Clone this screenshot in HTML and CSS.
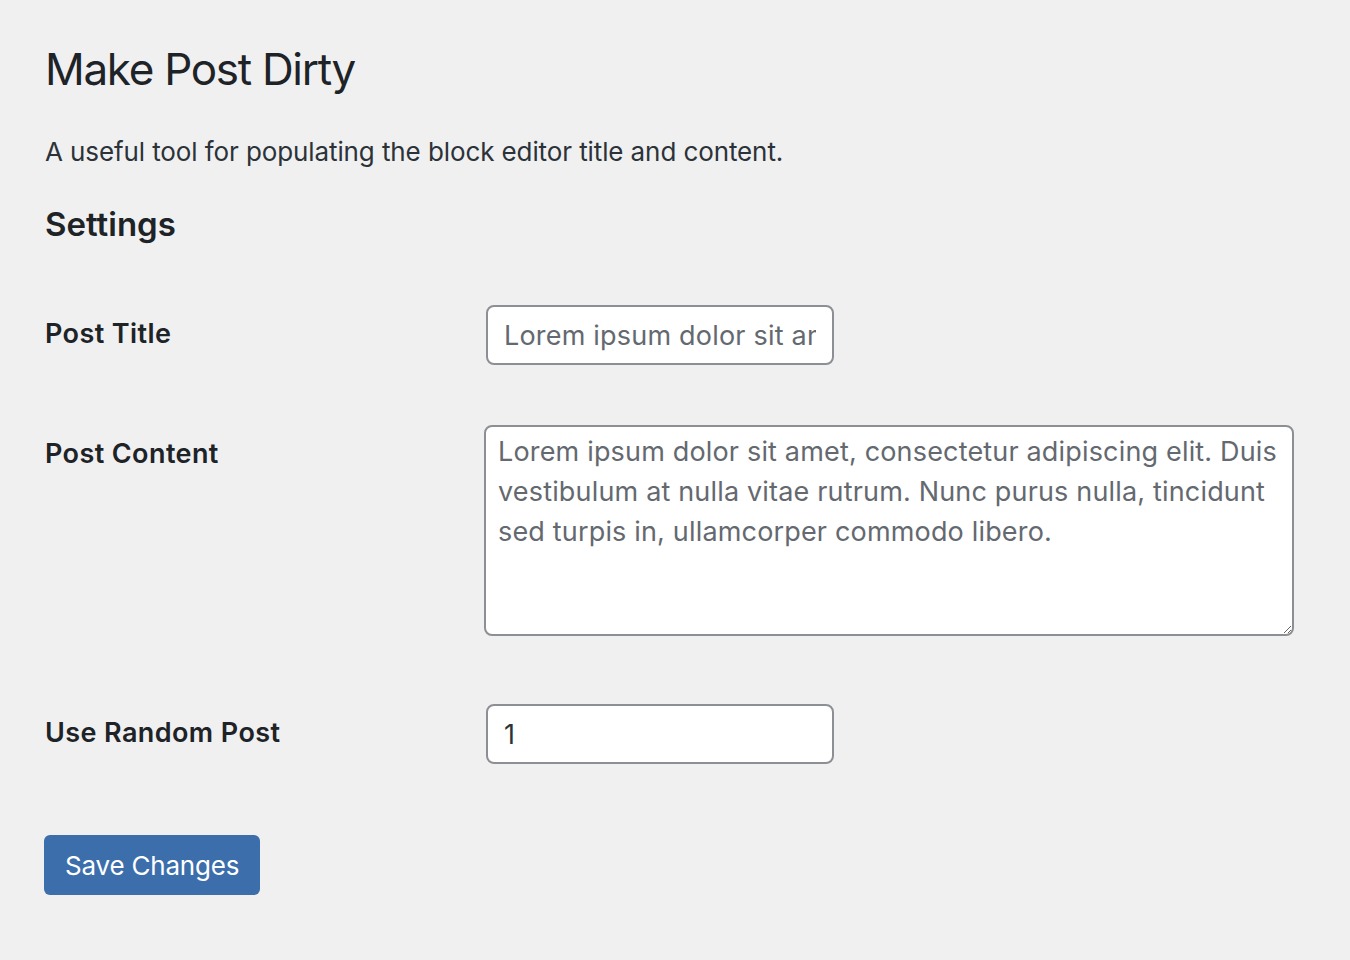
FILE: index.html
```html
<!DOCTYPE html>
<html lang="en">
<head>
<meta charset="utf-8">
<title>Make Post Dirty</title>
<link rel="stylesheet" href="styles.css">
</head>
<body>
<div class="wrap">
  <h1 class="page-title">Make Post Dirty</h1>
  <p class="desc">A useful tool for populating the block editor title and content.</p>
  <h2 class="section-title">Settings</h2>
  <form class="form">
    <div class="row row-title">
      <label class="label" for="pt">Post Title</label>
      <div class="field"><input id="pt" class="input" type="text" placeholder="Lorem ipsum dolor sit amet"></div>
    </div>
    <div class="row row-content">
      <label class="label" for="pc">Post Content</label>
      <div class="field"><textarea id="pc" class="textarea" placeholder="Lorem ipsum dolor sit amet, consectetur adipiscing elit. Duis vestibulum at nulla vitae rutrum. Nunc purus nulla, tincidunt sed turpis in, ullamcorper commodo libero."></textarea></div>
    </div>
    <div class="row row-random">
      <label class="label" for="rp">Use Random Post</label>
      <div class="field"><input id="rp" class="input input-num" type="text" value="1"></div>
    </div>
    <div class="actions">
      <button class="button" type="button">Save Changes</button>
    </div>
  </form>
</div>
</body>
</html>
```

FILE: styles.css
```css
html, body {
  margin: 0;
  padding: 0;
  background: #f0f0f1;
}
body {
  font-family: Inter, "Noto Sans", sans-serif;
  color: #1d2327;
}
.wrap {
  padding: 0 45px;
}
.page-title {
  margin: 0;
  padding-top: 39px;
  font-size: 44px;
  font-weight: 400;
  line-height: 60px;
  letter-spacing: -1.3px;
}
.desc {
  margin: 38px 0 0;
  font-size: 26px;
  line-height: 30px;
  color: #2c3338;
  letter-spacing: -0.1px;
}
.section-title {
  margin: 37px 0 0;
  font-size: 33px;
  font-weight: 600;
  line-height: 40px;
  letter-spacing: 0;
}
.form {
  margin-top: 31px;
}
.row {
  display: flex;
  align-items: flex-start;
}
.label {
  width: 440px;
  flex: none;
  font-size: 27px;
  font-weight: 600;
  line-height: 36px;
  letter-spacing: 0.4px;
  padding-top: 41px;
}
.field {
  padding: 30px 0;
}
.row-content .field {
  padding-bottom: 38px;
}
.input {
  box-sizing: border-box;
  width: 348px;
  height: 60px;
  margin-left: 1px;
  border: 2px solid #8c8f94;
  border-radius: 8px;
  background: #fff;
  padding: 0 16px;
  font-family: Inter, "Noto Sans", sans-serif;
  font-size: 27px;
  color: #2c3338;
  letter-spacing: 0.2px;
  outline: none;
}
.input::placeholder {
  color: #646970;
  opacity: 1;
}
.textarea {
  display: block;
  box-sizing: border-box;
  width: 810px;
  height: 211px;
  margin-left: -1px;
  border: 2px solid #8c8f94;
  border-radius: 8px;
  background: #fff;
  padding: 5px 12px;
  font-family: Inter, "Noto Sans", sans-serif;
  font-size: 27px;
  line-height: 40px;
  letter-spacing: 0.17px;
  color: #2c3338;
  resize: vertical;
  outline: none;
}
.textarea::placeholder {
  color: #646970;
  opacity: 1;
}
.actions {
  padding-top: 41px;
}
.button {
  box-sizing: border-box;
  height: 60px;
  margin-left: -1px;
  padding: 0 21px;
  border: 0;
  border-radius: 6px;
  background: #3b6eab;
  color: #fff;
  font-family: Inter, "Noto Sans", sans-serif;
  font-size: 26px;
  letter-spacing: -0.2px;
  cursor: pointer;
}
```
